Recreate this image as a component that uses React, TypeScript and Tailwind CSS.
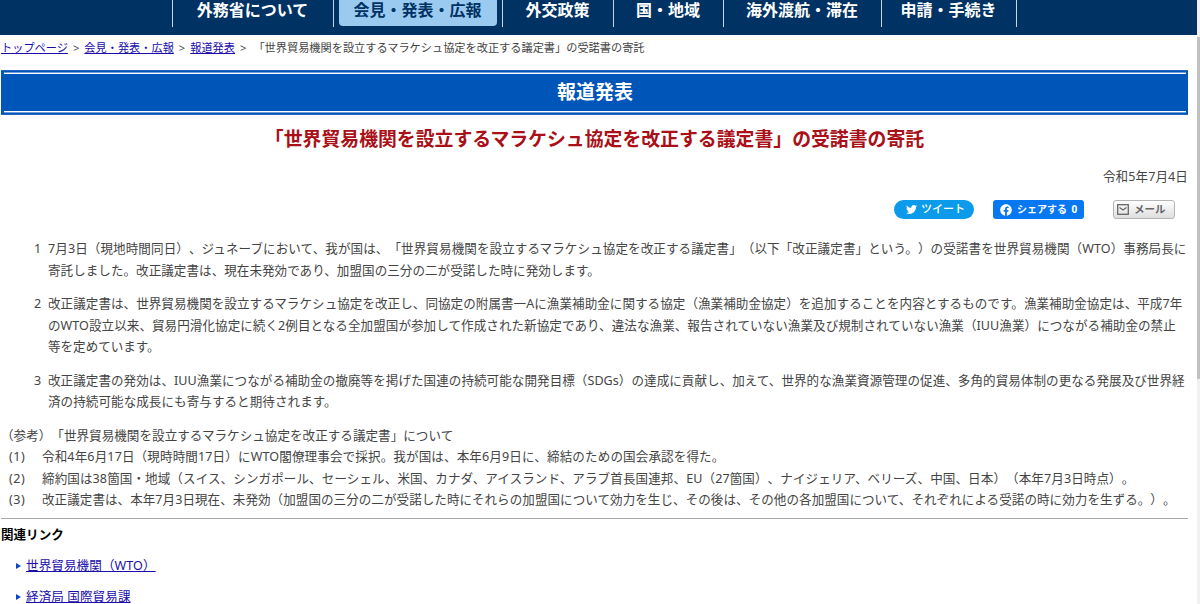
import React from 'react';
import { FaTwitter, FaFacebook } from 'react-icons/fa';

const navItems = [
  { label: '外務省について', width: 'w-[161px]' },
  { label: '会見・発表・広報', width: 'w-[169px]', active: true },
  { label: '外交政策', width: 'w-[111px]' },
  { label: '国・地域', width: 'w-[110px]' },
  { label: '海外渡航・滞在', width: 'w-[158px]' },
  { label: '申請・手続き', width: 'w-[135px]' },
];

type TextLine = [text: string, spacing?: string];

const paragraphs: TextLine[][] = [
  [
    ['7月3日（現地時間同日）、ジュネーブにおいて、我が国は、「世界貿易機関を設立するマラケシュ協定を改正する議定書」（以下「改正議定書」という。）の受諾書を世界貿易機関（WTO）事務局長に', 'tracking-[0.09px]'],
    ['寄託しました。改正議定書は、現在未発効であり、加盟国の三分の二が受諾した時に発効します。', 'tracking-[0.04px]'],
  ],
  [
    ['改正議定書は、世界貿易機関を設立するマラケシュ協定を改正し、同協定の附属書一Aに漁業補助金に関する協定（漁業補助金協定）を追加することを内容とするものです。漁業補助金協定は、平成7年', 'tracking-[0.05px]'],
    ['のWTO設立以来、貿易円滑化協定に続く2例目となる全加盟国が参加して作成された新協定であり、違法な漁業、報告されていない漁業及び規制されていない漁業（IUU漁業）につながる補助金の禁止', 'tracking-[0.06px]'],
    ['等を定めています。'],
  ],
  [
    ['改正議定書の発効は、IUU漁業につながる補助金の撤廃等を掲げた国連の持続可能な開発目標（SDGs）の達成に貢献し、加えて、世界的な漁業資源管理の促進、多角的貿易体制の更なる発展及び世界経', 'tracking-[0.055px]'],
    ['済の持続可能な成長にも寄与すると期待されます。', 'tracking-[0.06px]'],
  ],
];

const notes: [string, TextLine][] = [
  ['(1)', ['令和4年6月17日（現時時間17日）にWTO閣僚理事会で採択。我が国は、本年6月9日に、締結のための国会承認を得た。', 'tracking-[0.13px]']],
  ['(2)', ['締約国は38箇国・地域（スイス、シンガポール、セーシェル、米国、カナダ、アイスランド、アラブ首長国連邦、EU（27箇国）、ナイジェリア、ベリーズ、中国、日本）（本年7月3日時点）。', 'tracking-[0.1px]']],
  ['(3)', ['改正議定書は、本年7月3日現在、未発効（加盟国の三分の二が受諾した時にそれらの加盟国について効力を生じ、その後は、その他の各加盟国について、それぞれによる受諾の時に効力を生ずる。）。', 'tracking-[0.05px]']],
];

const links = ['世界貿易機関（WTO）', '経済局 国際貿易課'];

const Line = ({ line }: { line: TextLine }) => (
  <span className={`block ${line[1] ?? ''}`}>{line[0]}</span>
);

const Header = () => (
  <header className="h-[35px] bg-[#003263] pl-[172px]">
    <nav className="flex h-[27px] w-fit border-l border-slate-300">
      {navItems.map((item) => (
        <div key={item.label} className={`flex border-r border-slate-300 px-[5px] ${item.width}`}>
          <a
            className={`flex h-[26px] grow justify-center rounded-b pr-[1px] text-base leading-[21px] font-bold ${item.active ? 'bg-[#9bcaf0] text-[#003263]' : 'text-white'}`}
          >
            {item.label}
          </a>
        </div>
      ))}
    </nav>
  </header>
);

const Breadcrumb = () => (
  <div className="flex h-[35px] gap-[5px] pt-1 pl-[1px] text-[11.2px] leading-[18px]">
    {['トップページ', '会見・発表・広報', '報道発表'].map((label) => (
      <React.Fragment key={label}>
        <a className="text-[#1a0dab] underline">{label}</a>
        <span>&gt;</span>
      </React.Fragment>
    ))}
    <span className="pl-[2px]">「世界貿易機関を設立するマラケシュ協定を改正する議定書」の受諾書の寄託</span>
  </div>
);

const ShareButtons = () => (
  <div className="mt-[13px] flex h-5 items-start justify-end pr-[13px] font-bold">
    <div className="flex h-[19px] w-20 items-center gap-1 rounded-full bg-[#0c9bea] pl-3 text-[11px] text-white">
      <FaTwitter size={11} className="shrink-0" />
      <span className="pb-[2px] font-medium">ツイート</span>
    </div>
    <div className="ml-[19px] flex h-[19px] w-[91px] items-center gap-[5px] rounded-[3px] bg-[#0877f2] pl-[7px] text-[10px] text-white">
      <FaFacebook size={12} className="shrink-0" />
      <span className="pb-[1px] [word-spacing:2px]">シェアする 0</span>
    </div>
    <div className="ml-[29px] flex h-[19px] w-[62px] items-center gap-[5px] rounded-[3px] border border-[#b5b5b5] bg-linear-to-b from-white to-[#dedede] pl-[3px] text-[10.5px] text-[#666]">
      <svg width="12" height="11" viewBox="0 0 12 11" fill="none" stroke="#666" strokeWidth="1.3">
        <rect x="0.7" y="0.7" width="10.6" height="9.6" />
        <path d="M2.5 3.5 6 6l3.5-2.5" />
      </svg>
      <span>メール</span>
    </div>
  </div>
);

export default function App() {
  return (
    <div
      lang="ja"
      className="flex h-[604px] overflow-hidden bg-white font-['Noto_Sans','Noto_Sans_CJK_JP',sans-serif] text-[12.55px] leading-[21.3px] whitespace-nowrap text-[#444] [text-spacing-trim:space-all]"
    >
      <div className="w-[1197px] shrink-0">
        <Header />
        <Breadcrumb />
        <main className="ml-[1px] w-[1187px]">
          <div className="h-[45px] border-y border-[#2369c0] bg-[#0055b8] py-[1px] pr-[2px] pl-[3px]">
            <div className="h-[41px] border-y border-[#6f9bd8]">
              <h1 className="h-[39px] border-y border-white text-center text-[19px] leading-[36px] font-bold text-white">報道発表</h1>
            </div>
          </div>
          <h2 className="mt-[9px] h-[30px] text-center text-[18.86px] leading-[31px] font-bold text-[#a91018]">
            「世界貿易機関を設立するマラケシュ協定を改正する議定書」の受諾書の寄託
          </h2>
          <p className="mt-3 text-right tracking-[0.1px]">令和5年7月4日</p>
          <ShareButtons />
          <ol className="mt-[18px] flex flex-col gap-[12.6px]">
            {paragraphs.map((lines, i) => (
              <li key={i} className="flex">
                <span className="w-[47px] pl-[33px]">{i + 1}</span>
                <div>
                  {lines.map((line) => (
                    <Line key={line[0]} line={line} />
                  ))}
                </div>
              </li>
            ))}
          </ol>
          <p className="mt-[12.6px] tracking-[0.04px]">（参考）「世界貿易機関を設立するマラケシュ協定を改正する議定書」について</p>
          {notes.map(([no, line]) => (
            <div key={no} className="flex">
              <span className="w-[41px] pl-[8px] tracking-[0.5px]">{no}</span>
              <Line line={line} />
            </div>
          ))}
          <hr className="mt-[7.5px] border-t-[1px] border-[#aaa]" />
          <h3 className="mt-[5.5px] font-bold text-black">関連リンク</h3>
          <ul className="mt-[9.5px] flex flex-col gap-[9.6px]">
            {links.map((label) => (
              <li key={label} className="flex items-center pl-[15px]">
                <svg width="5" height="6" viewBox="0 0 5 6" className="mr-[5px]">
                  <path d="M0 0 5 3 0 6z" fill="#0b45c4" />
                </svg>
                <a className="tracking-[0.1px] text-[#1a0dab] underline">{label}</a>
              </li>
            ))}
          </ul>
        </main>
      </div>
      <div className="grow bg-[#f1f1f1] pt-[37px]">
        <div className="h-[342px] bg-[#c1c1c1]" />
      </div>
    </div>
  );
}
